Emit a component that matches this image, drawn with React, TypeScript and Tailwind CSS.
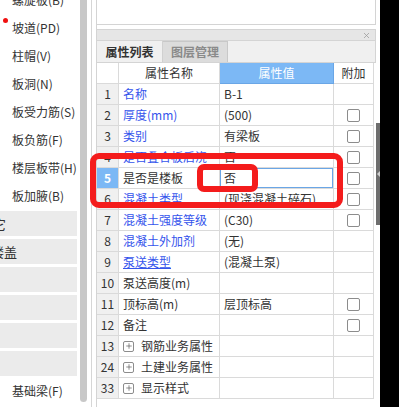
import { Plus, X } from "lucide-react";

type Row = {
  n: string;
  name: string;
  val?: string;
  blue?: boolean;
  link?: boolean;
  cb?: boolean;
  sel?: boolean;
  group?: boolean;
};

const rows: Row[] = [
  { n: "1", name: "名称", val: "B-1", blue: true },
  { n: "2", name: "厚度(mm)", val: "(500)", blue: true, cb: true },
  { n: "3", name: "类别", val: "有梁板", blue: true, cb: true },
  { n: "4", name: "是否叠合板后浇", val: "否", blue: true, cb: true },
  { n: "5", name: "是否是楼板", val: "否", cb: true, sel: true },
  { n: "6", name: "混凝土类型", val: "(现浇混凝土碎石)", blue: true, cb: true },
  { n: "7", name: "混凝土强度等级", val: "(C30)", blue: true, cb: true },
  { n: "8", name: "混凝土外加剂", val: "(无)", blue: true },
  { n: "9", name: "泵送类型", val: "(混凝土泵)", blue: true, link: true },
  { n: "10", name: "泵送高度(m)" },
  { n: "11", name: "顶标高(m)", val: "层顶标高", cb: true },
  { n: "12", name: "备注", cb: true },
  { n: "13", name: "钢筋业务属性", group: true },
  { n: "24", name: "土建业务属性", group: true },
  { n: "33", name: "显示样式", group: true },
];

const items = ["螺旋板(B)", "坡道(PD)", "柱帽(V)", "板洞(N)", "板受力筋(S)", "板负筋(F)", "楼层板带(H)", "板加腋(B)"];

const categories = [
  { label: "其它", shift: "ml-[-20px]" },
  { label: "空心楼盖", shift: "ml-[-35px]" },
  { label: "", shift: "" },
  { label: "", shift: "" },
  { label: "", shift: "" },
  { label: "", shift: "" },
];

function Checkbox() {
  return <div className="w-[13px] h-[13px] rounded-[2px] border border-[#8c8c8c] bg-white" />;
}

export default function App() {
  return (
    <div className="relative flex w-[399px] h-[407px] overflow-hidden bg-white text-[12px] text-[#333] font-['Noto_Sans_CJK_SC',sans-serif]">
      {/* component tree */}
      <div className="w-[80px] shrink-0 overflow-hidden">
        <div className="mt-[-14px]">
          {items.map((t, i) => (
            <div key={t} className="relative h-[28px] flex items-center pl-[12px] whitespace-nowrap">
              {i === 1 && <span className="absolute left-[3px] top-[4px] w-[5px] h-[5px] rounded-full bg-[#f01010]" />}
              {t}
            </div>
          ))}
        </div>
        <div className="h-[1px]" />
        {categories.map((c, i) => (
          <div key={i} className="w-[77px] h-[25px] mb-[3px] bg-[#ebebeb] flex items-center overflow-hidden whitespace-nowrap text-[13px]">
            {c.label && <span className={c.shift}>{c.label}</span>}
          </div>
        ))}
        <div className="h-[28px] mt-[-2px] flex items-center pl-[12px] whitespace-nowrap">基础梁(F)</div>
      </div>
      <div className="w-[7px] shrink-0">
        <div className="h-[402px] rounded-b-full bg-[#c8c8c8]" />
      </div>
      <div className="w-[4px] shrink-0" />
      <div className="w-px shrink-0 bg-[#d6d6d6]" />
      <div className="w-[4px] shrink-0" />

      {/* property panel */}
      <div className="w-[280px] shrink-0 flex flex-col border-l border-[#d4d4d4]">
        <div className="h-[25px] border-b border-r border-[#d4d4d4]" />
        <div className="h-[4px]" />
        <div className="h-[12px] bg-[#e6e6e6] border-y border-r border-[#d4d4d4] flex items-center justify-end pr-[4px]">
          <X size={9} strokeWidth={2} className="text-[#9a9a9a]" />
        </div>
        <div className="h-[22px] bg-[#f0f0f0] border-b border-r border-[#d4d4d4] flex font-bold">
          <div className="w-[66px] flex items-center justify-center border-r border-[#d0d0d0]">属性列表</div>
          <div className="w-[65px] flex items-center justify-center bg-[#dcdcdc] border-r border-t border-[#c8c8c8] text-[#8a8a8a]">图层管理</div>
        </div>

        <div className="w-[277px]">
          <div className="grid grid-cols-[22px_101px_114px_40px] h-[21px]">
            <div className="border-r border-b border-[#dadada]" />
            <div className="border-r border-b border-[#dadada] flex items-center justify-center">属性名称</div>
            <div className="border-r border-b border-[#6aa6e6] bg-[#7cb8f5] text-white flex items-center justify-center">属性值</div>
            <div className="border-r border-b border-[#dadada] flex items-center justify-center">附加</div>
          </div>
          {rows.map((r) => (
            <div key={r.n} className="grid grid-cols-[22px_101px_114px_40px] h-[21px]">
              <div
                className={
                  r.sel
                    ? "border-r border-b border-[#dadada] bg-[#7cb8f5] text-white font-bold flex items-center justify-center"
                    : "border-r border-b border-[#dadada] bg-[#f0f0f0] flex items-center justify-center"
                }
              >
                {r.n}
              </div>
              <div className="border-r border-b border-[#dadada] flex items-center pl-[4px] whitespace-nowrap overflow-hidden">
                {r.group && (
                  <span className="w-[11px] h-[11px] mr-[7px] rounded-[2px] border border-[#8c8c8c] flex items-center justify-center">
                    <Plus size={8} strokeWidth={2} className="text-[#555]" />
                  </span>
                )}
                <span className={(r.blue ? "text-[#3554ec]" : "") + (r.link ? " underline" : "")}>{r.name}</span>
              </div>
              <div className="border-r border-b border-[#dadada] whitespace-nowrap overflow-hidden">
                <div className={r.sel ? "h-full flex items-center pl-[3px] border border-[#6aa6e6]" : "h-full flex items-center pl-[4px]"}>
                  {r.val}
                </div>
              </div>
              <div className="border-r border-b border-[#dadada] flex items-center justify-center">
                {r.cb && <Checkbox />}
              </div>
            </div>
          ))}
        </div>
      </div>

      <div className="w-[4px] shrink-0 pt-[123px]">
        <div className="h-[102px] bg-[#6e6e6e] flex items-center justify-center">
          <span className="w-0 h-0 border-y-[3px] border-y-transparent border-r-[3px] border-r-[#cfcfcf]" />
        </div>
      </div>
      <div className="w-[19px] shrink-0 bg-black" />

      {/* annotation marks */}
      <div className="absolute left-[90px] top-[153px] w-[253px] h-[55px] border-[6px] border-[#f41c1c] rounded-[9px]" />
      <div className="absolute left-[197px] top-[164px] w-[61px] h-[28px] border-[6px] border-[#f41c1c] rounded-[7px]" />
    </div>
  );
}
